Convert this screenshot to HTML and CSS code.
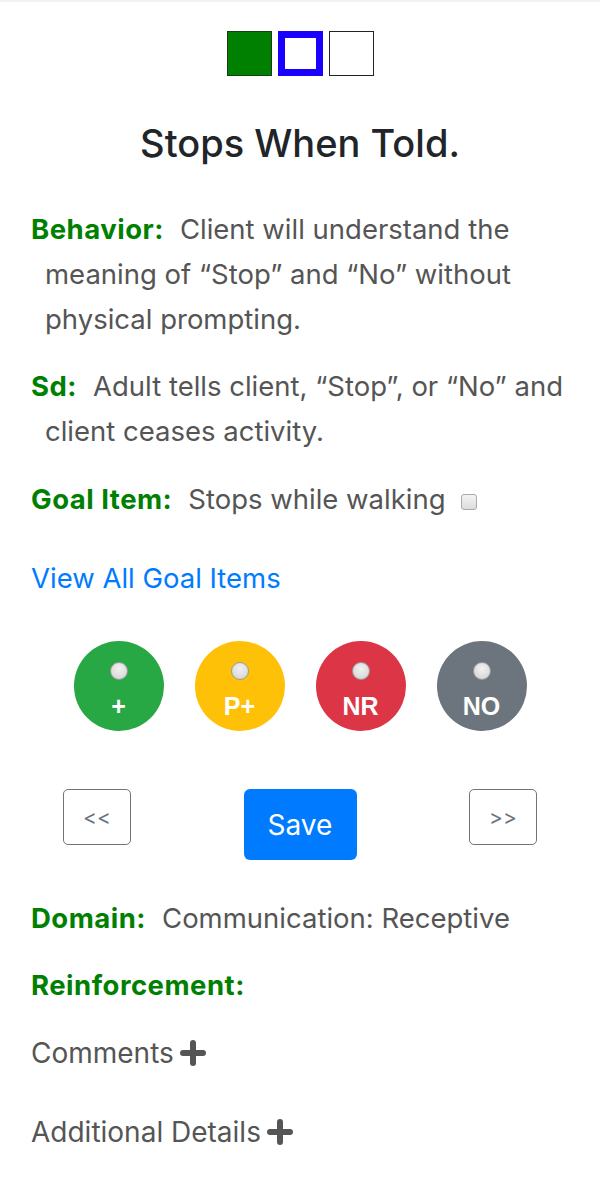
FILE: index.html
```html
<!DOCTYPE html>
<html lang="en">
<head>
<meta charset="utf-8">
<title>Stops When Told.</title>
<link rel="stylesheet" href="styles.css">
</head>
<body>
<div class="page">
  <div class="progress">
    <span class="sq sq-done"></span>
    <span class="sq sq-current"></span>
    <span class="sq sq-todo"></span>
  </div>

  <h1 class="title">Stops When Told.</h1>

  <p class="field field-behavior"><span class="label">Behavior:</span>Client will understand the meaning of “Stop” and “No” without physical prompting.</p>
  <p class="field field-sd"><span class="label">Sd:</span>Adult tells client, “Stop”, or “No” and client ceases activity.</p>
  <p class="field field-goal"><span class="label">Goal Item:</span>Stops while walking <span class="checkbox"></span></p>

  <a class="link" href="#">View All Goal Items</a>

  <div class="scores">
    <div class="score score-plus"><span class="radio"></span><span class="score-text">+</span></div>
    <div class="score score-prompt"><span class="radio"></span><span class="score-text">P+</span></div>
    <div class="score score-nr"><span class="radio"></span><span class="score-text">NR</span></div>
    <div class="score score-no"><span class="radio"></span><span class="score-text">NO</span></div>
  </div>

  <div class="actions">
    <button class="btn btn-nav">&lt;&lt;</button>
    <button class="btn btn-save">Save</button>
    <button class="btn btn-nav">&gt;&gt;</button>
  </div>

  <p class="field field-domain"><span class="label">Domain:</span>Communication: Receptive</p>
  <p class="field field-reinf"><span class="label">Reinforcement:</span></p>

  <div class="toggle toggle-comments">Comments
    <svg class="plus" viewBox="0 0 26 26" width="26" height="26"><path d="M13 3v20M3 13h20" stroke="#555" stroke-width="6" stroke-linecap="round" fill="none"/></svg>
  </div>
  <div class="toggle toggle-details">Additional Details
    <svg class="plus" viewBox="0 0 26 26" width="26" height="26"><path d="M13 3v20M3 13h20" stroke="#555" stroke-width="6" stroke-linecap="round" fill="none"/></svg>
  </div>
</div>
</body>
</html>
```

FILE: styles.css
```css
* { box-sizing: border-box; }

html, body {
  margin: 0;
  padding: 0;
  background: #fff;
}

body {
  font-family: Inter, "Noto Sans", "Liberation Sans", sans-serif;
  color: #555;
}

.page {
  border-top: 2px solid #f2f2f2;
  padding: 29px 31px 40px 31px;
}

.progress {
  display: flex;
  justify-content: center;
  gap: 6px;
}

.sq {
  display: block;
  width: 45px;
  height: 45px;
}

.sq-done {
  background: #008000;
  border: 1px solid #1c3a1c;
}

.sq-current {
  background: #fff;
  border: 7px solid #1a00ff;
}

.sq-todo {
  background: #fff;
  border: 1px solid #222;
}

.title {
  margin: 43px 0 0 0;
  text-align: center;
  font-size: 38px;
  line-height: 48px;
  font-weight: 500;
  color: #212529;
}

.field {
  margin: 0;
  font-size: 27.5px;
  line-height: 45px;
  padding-left: 14px;
  text-indent: -14px;
}

.label {
  color: #008000;
  font-weight: 700;
  letter-spacing: 0.5px;
  margin-right: 16px;
}

.field-behavior { margin-top: 40px; }
.field-sd { margin-top: 22px; }
.field-goal { margin-top: 23px; }

.checkbox {
  display: inline-block;
  width: 16px;
  height: 16px;
  margin-left: 8px;
  border: 1px solid #a9a9a9;
  border-radius: 3px;
  background: linear-gradient(#f4f4f4, #dcdcdc);
  vertical-align: -1px;
}

.link {
  display: block;
  margin-top: 34px;
  font-size: 27.5px;
  line-height: 45px;
  color: #007bff;
  text-decoration: none;
}

.scores {
  margin-top: 40px;
  display: flex;
  justify-content: center;
  gap: 31px;
}

.score {
  width: 90px;
  height: 90px;
  border-radius: 50%;
  display: flex;
  flex-direction: column;
  align-items: center;
  padding-top: 21px;
}

.score-plus { background: #28a745; }
.score-prompt { background: #ffc107; }
.score-nr { background: #dc3545; }
.score-no { background: #6c757d; }

.radio {
  display: block;
  width: 18px;
  height: 18px;
  border-radius: 50%;
  border: 1px solid #9a9a9a;
  background: radial-gradient(circle at 50% 35%, #f2f2f2, #d0d0d0);
}

.score-text {
  display: block;
  margin-top: 11px;
  color: #fff;
  font-weight: 700;
  font-size: 25px;
  line-height: 30px;
  font-family: "Liberation Sans", Arial, sans-serif;
}

.actions {
  margin: 58px -31px 0 -31px;
  display: grid;
  grid-template-columns: repeat(3, 203px);
  justify-content: center;
  align-items: start;
  justify-items: center;
}

.btn {
  font-family: Inter, "Noto Sans", "Liberation Sans", sans-serif;
  cursor: pointer;
}

.btn-nav {
  width: 68px;
  height: 56px;
  background: #fff;
  border: 1px solid #6c757d;
  border-radius: 5px;
  color: #6c757d;
  font-size: 21px;
  padding: 0;
}

.btn-save {
  width: 113px;
  height: 71px;
  background: #007bff;
  border: none;
  border-radius: 6px;
  color: #fff;
  font-size: 28px;
  padding: 0;
}

.field-domain { margin-top: 36px; }
.field-reinf { margin-top: 22px; }

.toggle {
  display: flex;
  align-items: center;
  gap: 6px;
  font-size: 28px;
  line-height: 45px;
}

.toggle-comments { margin-top: 23px; }
.toggle-details { margin-top: 34px; }

.plus {
  display: block;
  margin-top: -2px;
}
```
